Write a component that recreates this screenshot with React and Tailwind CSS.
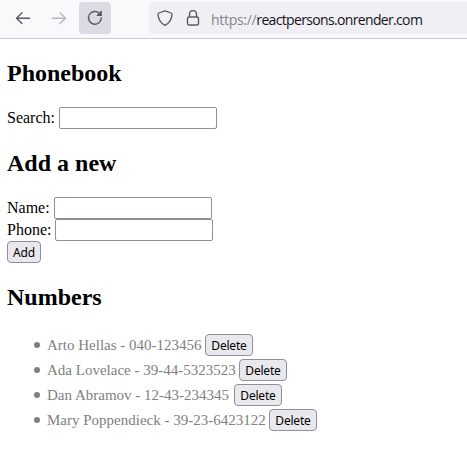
import React from "react";

const people = [
  { name: "Arto Hellas", number: "040-123456", width: "w-[158px]" },
  { name: "Ada Lovelace", number: "39-44-5323523", width: "w-[192px]" },
  { name: "Dan Abramov", number: "12-43-234345", width: "w-[187px]" },
  { name: "Mary Poppendieck", number: "39-23-6423122", width: "w-[222px]" },
];

function Toolbar() {
  return (
    <header className="flex h-[39px] items-start border-b border-[#cccccc] bg-[#f9f9fb] pt-[2px]">
      <div className="flex h-8 w-[79px] shrink-0 items-center gap-[20px] pl-[15px]">
        <svg className="h-4 w-4 shrink-0" viewBox="0 0 16 16" fill="none" stroke="#5b5b66" strokeWidth="1.4" strokeLinecap="round" strokeLinejoin="round">
          <path d="M14.500 8.200H1.500M7 2.800 1.500 8.200 7 13.600" />
        </svg>
        <svg className="h-4 w-4 shrink-0" viewBox="0 0 16 16" fill="none" stroke="#b8b8bf" strokeWidth="1.4" strokeLinecap="round" strokeLinejoin="round">
          <path d="M1.500 8.200h13M9 2.800l5.500 5.400L9 13.600" />
        </svg>
      </div>
      <div className="flex h-8 w-8 shrink-0 items-center justify-center rounded bg-[#dbdbe4]">
        <svg className="h-4 w-4" viewBox="0 0 16 16" fill="none">
          <path d="M12.2 3.1A6.4 6.4 0 1 0 14.3 8" stroke="#5b5b66" strokeWidth="1.4" strokeLinecap="round" />
          <path d="M14.9 1.1v4.4a.5.5 0 0 1-.5.5H10a.4.4 0 0 1-.3-.7L14.2.8a.4.4 0 0 1 .7.3z" fill="#5b5b66" />
        </svg>
      </div>
      <div className="ml-[38px] flex h-8 flex-1 items-center rounded-l bg-[#f0f0f4] pl-2">
        <svg className="h-4 w-4 shrink-0" viewBox="0 0 16 16" fill="none" stroke="#5b5b66" strokeWidth="1.3" strokeLinejoin="round">
          <path d="M8 .8 14.2 3c.5.2.8.5.8 1C14.9 9.400 12.500 13 8 15.300 3.500 13 1.100 9.400 1 4c0-.5.3-.8.8-1z" />
        </svg>
        <svg className="ml-3 h-4 w-4 shrink-0" viewBox="0 0 16 16" fill="none" stroke="#5b5b66" strokeWidth="1.4">
          <rect x="2.500" y="7" width="11" height="8" rx="1.6" />
          <path d="M4.500 7V4a3.500 3.500 0 0 1 7 0v3" />
        </svg>
        <span className="ml-[10px] mt-[3px] whitespace-nowrap font-['Open_Sans',sans-serif] text-[14px] leading-5 tracking-[-0.66px] text-[#15141a]">
          <span className="tracking-[-0.3px] text-[#85858c]">https://</span>reactpersons.onrender.com
        </span>
      </div>
    </header>
  );
}

function Heading({ children }) {
  return <h2 className="h-7 text-2xl font-bold leading-7">{children}</h2>;
}

function Field({ label, labelWidth }) {
  return (
    <label className="flex h-[22px] items-center">
      <span className={`${labelWidth} shrink-0 whitespace-nowrap`}>{label}:</span>
      <input className="h-[22px] w-[158px] rounded-[2px] border border-[#8f8f9d] bg-white px-1 outline-none" />
    </label>
  );
}

function Button({ children, size }) {
  return (
    <button className={`${size} flex h-[22px] shrink-0 items-center justify-center rounded border border-[#8f8f9d] bg-[#e9e9ed] pt-px font-['Noto_Sans',sans-serif] text-[12px] leading-4 tracking-[-0.2px] text-black`}>
      {children}
    </button>
  );
}

export default function App() {
  return (
    <div className="h-[450px] overflow-hidden bg-white font-['Liberation_Serif',serif] text-base leading-[18px] text-black">
      <Toolbar />
      <main className="pl-[7px] pt-[20px]">
        <Heading>Phonebook</Heading>
        <div className="mt-5">
          <Field label="Search" labelWidth="w-[52px]" />
        </div>
        <div className="mt-5">
          <Heading>Add a new</Heading>
        </div>
        <form className="mt-5" onSubmit={(e) => e.preventDefault()}>
          <Field label="Name" labelWidth="w-[47px]" />
          <Field label="Phone" labelWidth="w-[48px]" />
          <Button size="w-[34px]">Add</Button>
        </form>
        <div className="mt-5">
          <Heading>Numbers</Heading>
        </div>
        <ul className="mt-[23px] flex flex-col gap-[3px] pl-[27px] text-[15px] text-[#808080]">
          {people.map((person) => (
            <li key={person.name} className="flex h-[22px] items-center">
              <span className="mr-[7px] h-[6px] w-[6px] shrink-0 rounded-full bg-[#808080]" />
              <span className={`${person.width} shrink-0 whitespace-nowrap`}>
                {person.name} - {person.number}
              </span>
              <Button size="w-12">Delete</Button>
            </li>
          ))}
        </ul>
      </main>
    </div>
  );
}
